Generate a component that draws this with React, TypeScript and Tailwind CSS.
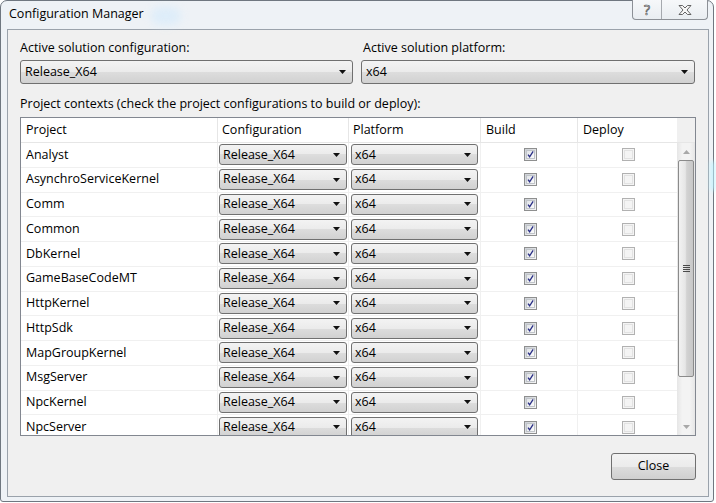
import React from "react";

const projects = [
  "Analyst",
  "AsynchroServiceKernel",
  "Comm",
  "Common",
  "DbKernel",
  "GameBaseCodeMT",
  "HttpKernel",
  "HttpSdk",
  "MapGroupKernel",
  "MsgServer",
  "NpcKernel",
  "NpcServer",
];

const font = "font-['Open_Sans','Noto_Sans',sans-serif]";

function Arrow() {
  return (
    <svg width="7" height="4" viewBox="0 0 7 4" className="shrink-0">
      <path d="M0 0H7L3.5 4Z" fill="#111" />
    </svg>
  );
}

function Combo({ text, className }: { text: string; className: string }) {
  return (
    <div
      className={`flex items-center justify-between rounded-[3px] border border-[#707070] bg-[linear-gradient(to_bottom,#f3f3f3_0%,#ebebeb_50%,#dddddd_50%,#d1d1d1_100%)] pl-[3px] pr-[6px] text-[12.5px] text-black ${className}`}
    >
      <span className="leading-none">{text}</span>
      <Arrow />
    </div>
  );
}

function CheckBox({ checked }: { checked: boolean }) {
  if (checked) {
    return (
      <div className="flex h-[13px] w-[13px] items-center justify-center border border-[#8e8f8f] bg-[linear-gradient(135deg,#cbcfd5_0%,#f6f6f6_100%)]">
        <div className="flex h-[9px] w-[9px] items-center justify-center border border-[#c0c4c9] bg-[linear-gradient(135deg,#e1e4e8,#fbfbfb)]">
          <svg width="9" height="9" viewBox="0 0 9 9">
            <path d="M1.3 4.6L3.4 7.4L7.9 0.6" stroke="#2a2f86" strokeWidth="1.7" fill="none" />
          </svg>
        </div>
      </div>
    );
  }
  return (
    <div className="flex h-[13px] w-[13px] items-center justify-center border border-[#b1b1b1] bg-[#f4f4f4]">
      <div className="h-[9px] w-[9px] border border-[#e2e2e2] bg-[#f4f4f4]" />
    </div>
  );
}

export default function App() {
  return (
    <div className={`h-[503px] w-[716px] overflow-hidden bg-white ${font}`}>
      <div className="relative flex h-[502px] w-[714px] flex-col rounded-t-[7px] rounded-b-[3px] border border-[#6f7780] bg-[#eef2f6]">
        {/* Aero glow */}
        <div className="absolute left-[150px] top-[6px] h-[18px] w-[30px] rounded-full bg-[#d3eafc] opacity-60 blur-[4px]" />
        <div className="absolute right-[-3px] top-[160px] h-[30px] w-[6px] rounded-full bg-[#bff3ff] opacity-70 blur-[2px]" />
        {/* Title bar */}
        <div className="relative flex h-[28px] shrink-0 items-start">
          <div className="pl-[8px] pt-[5px] text-[12.5px] leading-[16px] text-black">
            Configuration Manager
          </div>
          <div className="absolute right-[5px] top-[-1px] flex h-[20px] w-[76px] rounded-b-[4px] border border-t-0 border-[#8c9096] bg-[linear-gradient(to_bottom,#f6f8fa,#e9edf1)]">
            <div className="flex w-[29px] items-center justify-center border-r border-[#a5a9ae]">
              <span className="text-[14px] font-normal leading-none text-[#f4f4f4] [-webkit-text-stroke:0.7px_#555]">
                ?
              </span>
            </div>
            <div className="flex flex-1 items-center justify-center">
              <svg width="14" height="10" viewBox="0 0 14 10">
                <path
                  d="M1 0.5H4.5L7 3L9.5 0.5H13L9 5L13 9.5H9.5L7 7L4.5 9.5H1L5 5Z"
                  fill="#f7f7f7"
                  stroke="#555"
                  strokeWidth="0.9"
                />
              </svg>
            </div>
          </div>
        </div>
        {/* Client area */}
        <div className="ml-[6px] mr-[4px] flex h-[468px] flex-col border border-[#9aa2ab] bg-[#f0f0f0] px-[12px] pt-[10px] text-[12.5px] text-black">
          <div className="grid grid-cols-[333px_334px] gap-x-[8px]">
            <div className="leading-[16px]">Active solution configuration:</div>
            <div className="pl-[2px] leading-[16px]">Active solution platform:</div>
            <Combo text="Release_X64" className="mt-[4px] h-[24px] pl-[4px] pr-[5px]" />
            <Combo text="x64" className="mt-[4px] h-[24px] pl-[4px] pr-[5px]" />
          </div>
          <div className="mt-[12px] leading-[16px]">
            Project contexts (check the project configurations to build or deploy):
          </div>
          {/* Table */}
          <div className="mt-[5px] flex h-[319px] w-[676px] flex-col overflow-hidden border border-[#828790] bg-white">
            <div className="flex h-[25px] shrink-0 border-b border-[#e6e6e6]">
              <div className="flex w-[197px] items-center border-r border-[#e6e6e6] pl-[5px]">Project</div>
              <div className="flex w-[131px] items-center border-r border-[#e6e6e6] pl-[4px]">Configuration</div>
              <div className="flex w-[132px] items-center border-r border-[#e6e6e6] pl-[4px]">Platform</div>
              <div className="flex w-[97px] items-center border-r border-[#e6e6e6] pl-[5px]">Build</div>
              <div className="flex w-[99px] items-center pl-[5px]">Deploy</div>
              <div className="flex-1 bg-[#f0f0f0]" />
            </div>
            <div className="flex min-h-0 flex-1">
              <div className="flex w-[656px] flex-col overflow-hidden">
                {projects.map((p) => (
                  <div key={p} className="flex h-[24.75px] shrink-0 border-b border-[#f0f0f0]">
                    <div className="flex w-[197px] items-center border-r border-[#f0f0f0] pl-[5px]">{p}</div>
                    <div className="flex w-[131px] items-center border-r border-[#f0f0f0] pl-[1px]">
                      <Combo text="Release_X64" className="h-[21px] w-[128px]" />
                    </div>
                    <div className="flex w-[132px] items-center border-r border-[#f0f0f0] pl-[2px]">
                      <Combo text="x64" className="h-[21px] w-[127px]" />
                    </div>
                    <div className="flex w-[97px] items-center justify-center border-r border-[#f0f0f0] pl-[2px]">
                      <CheckBox checked />
                    </div>
                    <div className="flex w-[99px] items-center justify-center pl-[2px]">
                      <CheckBox checked={false} />
                    </div>
                  </div>
                ))}
              </div>
              {/* Scrollbar */}
              <div className="flex w-[18px] flex-col bg-[linear-gradient(to_right,#e6e6e6,#f3f3f3_30%,#f3f3f3_70%,#e6e6e6)]">
                <div className="flex h-[17px] items-center justify-center">
                  <svg width="7" height="4" viewBox="0 0 7 4">
                    <path d="M0 4H7L3.5 0Z" fill="#a8a8a8" />
                  </svg>
                </div>
                <div className="mx-[1px] flex h-[217px] items-center justify-center rounded-[2px] border border-[#8b8b8b] bg-[linear-gradient(to_right,#f2f2f2_0%,#e6e6e6_45%,#d2d2d2_55%,#c8c8c8_100%)]">
                  <div className="flex flex-col gap-[1px]">
                    <div className="h-[1px] w-[7px] bg-[#4a4a4a]" />
                    <div className="h-[1px] w-[7px] bg-[#4a4a4a]" />
                    <div className="h-[1px] w-[7px] bg-[#4a4a4a]" />
                    <div className="h-[1px] w-[7px] bg-[#4a4a4a]" />
                  </div>
                </div>
                <div className="flex-1" />
                <div className="flex h-[17px] items-center justify-center">
                  <svg width="7" height="4" viewBox="0 0 7 4">
                    <path d="M0 0H7L3.5 4Z" fill="#a8a8a8" />
                  </svg>
                </div>
              </div>
            </div>
          </div>
          <div className="mt-[17px] flex justify-end">
            <button className="flex h-[27px] w-[85px] items-center justify-center rounded-[3px] border border-[#707070] bg-[linear-gradient(to_bottom,#f3f3f3_0%,#ebebeb_50%,#dddddd_50%,#cfcfcf_100%)] text-[12.5px] text-black">
              Close
            </button>
          </div>
        </div>
      </div>
    </div>
  );
}
